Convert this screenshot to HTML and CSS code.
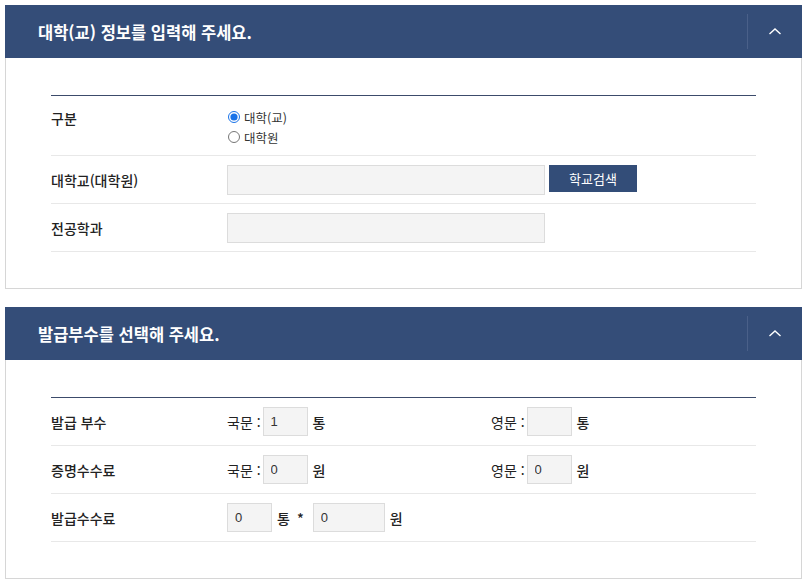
FILE: index.html
```html
<!DOCTYPE html>
<html lang="ko">
<head>
<meta charset="utf-8">
<link rel="stylesheet" href="styles.css">
</head>
<body>
<section class="panel">
  <div class="panel-head">
    <h2 class="panel-title">대학(교) 정보를 입력해 주세요.</h2>
    <button class="toggle" type="button" aria-label="접기">
      <svg width="14" height="8" viewBox="0 0 14 8"><path d="M1.5 7 L7 2 L12.5 7" fill="none" stroke="#fff" stroke-width="1.4"/></svg>
    </button>
  </div>
  <div class="panel-body">
    <div class="form">
      <div class="row row-tall">
        <div class="label">구분</div>
        <div class="value radios">
          <label class="radio"><input type="radio" name="kind" checked> 대학(교)</label>
          <label class="radio"><input type="radio" name="kind"> 대학원</label>
        </div>
      </div>
      <div class="row">
        <div class="label">대학교(대학원)</div>
        <div class="value">
          <input class="field wide" type="text">
          <button class="btn" type="button">학교검색</button>
        </div>
      </div>
      <div class="row">
        <div class="label">전공학과</div>
        <div class="value"><input class="field wide" type="text"></div>
      </div>
    </div>
  </div>
</section>

<section class="panel">
  <div class="panel-head">
    <h2 class="panel-title">발급부수를 선택해 주세요.</h2>
    <button class="toggle" type="button" aria-label="접기">
      <svg width="14" height="8" viewBox="0 0 14 8"><path d="M1.5 7 L7 2 L12.5 7" fill="none" stroke="#fff" stroke-width="1.4"/></svg>
    </button>
  </div>
  <div class="panel-body">
    <div class="form">
      <div class="row">
        <div class="label">발급 부수</div>
        <div class="value col2"><span class="pre">국문 :</span><input class="field small" type="text" value="1"><span class="unit">통</span></div>
        <div class="value"><span class="pre">영문 :</span><input class="field small" type="text" value=""><span class="unit">통</span></div>
      </div>
      <div class="row">
        <div class="label">증명수수료</div>
        <div class="value col2"><span class="pre">국문 :</span><input class="field small" type="text" value="0"><span class="unit">원</span></div>
        <div class="value"><span class="pre">영문 :</span><input class="field small" type="text" value="0"><span class="unit">원</span></div>
      </div>
      <div class="row">
        <div class="label">발급수수료</div>
        <div class="value"><input class="field small" type="text" value="0"><span class="unit">통</span><span class="times">*</span><input class="field mid" type="text" value="0"><span class="unit">원</span></div>
      </div>
    </div>
  </div>
</section>
</body>
</html>
```

FILE: styles.css
```css
* { box-sizing: border-box; }
html, body { margin: 0; background: #fff; }
body {
  padding: 5px 5px 0 5px;
  font-family: "Noto Sans CJK KR", "Noto Sans", sans-serif;
  color: #222;
  font-size: 14px;
  width: 807px;
}
.panel {
  width: 797px;
  border: 1px solid #d6d6d6;
  border-top: none;
  margin-bottom: 18px;
}
.panel-head {
  height: 53px;
  background: #344d78;
  margin: 0 -1px;
  display: flex;
  align-items: center;
  justify-content: space-between;
}
.panel-title {
  margin: 0 0 0 33px;
  color: #fff;
  font-size: 16.5px;
  font-weight: 700;
  letter-spacing: 0;
}
.toggle {
  width: 55px;
  height: 35px;
  border: none;
  border-left: 1px solid #4a6089;
  background: transparent;
  padding: 0 0 2px 0;
  display: flex;
  align-items: center;
  justify-content: center;
  cursor: pointer;
}
.panel-body {
  padding: 37px 45px 36px 45px;
}
.form {
  border-top: 1px solid #3c4b6b;
}
.row {
  display: flex;
  align-items: center;
  height: 48px;
  border-bottom: 1px solid #e8e8e8;
}
.row-tall {
  height: 60px;
  align-items: flex-start;
}
.row-tall .label { padding-top: 12px; }
.label {
  width: 176px;
  flex: none;
  font-size: 14px;
  font-weight: 500;
  color: #222;
}
.value {
  display: flex;
  align-items: center;
}
.col2 { width: 264px; flex: none; }
.radios {
  flex-direction: column;
  align-items: flex-start;
  padding-top: 11px;
}
.radio {
  display: flex;
  align-items: center;
  height: 20px;
  font-size: 12.5px;
  color: #333;
}
.radio input {
  margin: 0 4px 0 1px;
  width: 12px;
  height: 12px;
  accent-color: #1a73e8;
}
.field {
  border: 1px solid #dcdcdc;
  background: #f4f4f4;
  font-family: "Liberation Sans", Arial, sans-serif;
  font-size: 13px;
  color: #333;
  padding: 0 0 0 7px;
  outline: none;
}
.field.wide { width: 318px; height: 30px; }
.field.small { width: 45px; height: 29px; }
.field.mid { width: 72px; height: 29px; }
.btn {
  margin-left: 4px;
  width: 88px;
  height: 27px;
  border: none;
  background: #334d78;
  color: #fff;
  font-family: "Noto Sans CJK KR", sans-serif;
  font-size: 13px;
  cursor: pointer;
  margin-top: -2px;
}
.pre { margin-right: 2px; margin-left: 0; }
.unit { margin: 0 5px 0 5px; font-weight: 500; }
.times { margin: 0 9px 0 2px; font-weight: 500; }
```
